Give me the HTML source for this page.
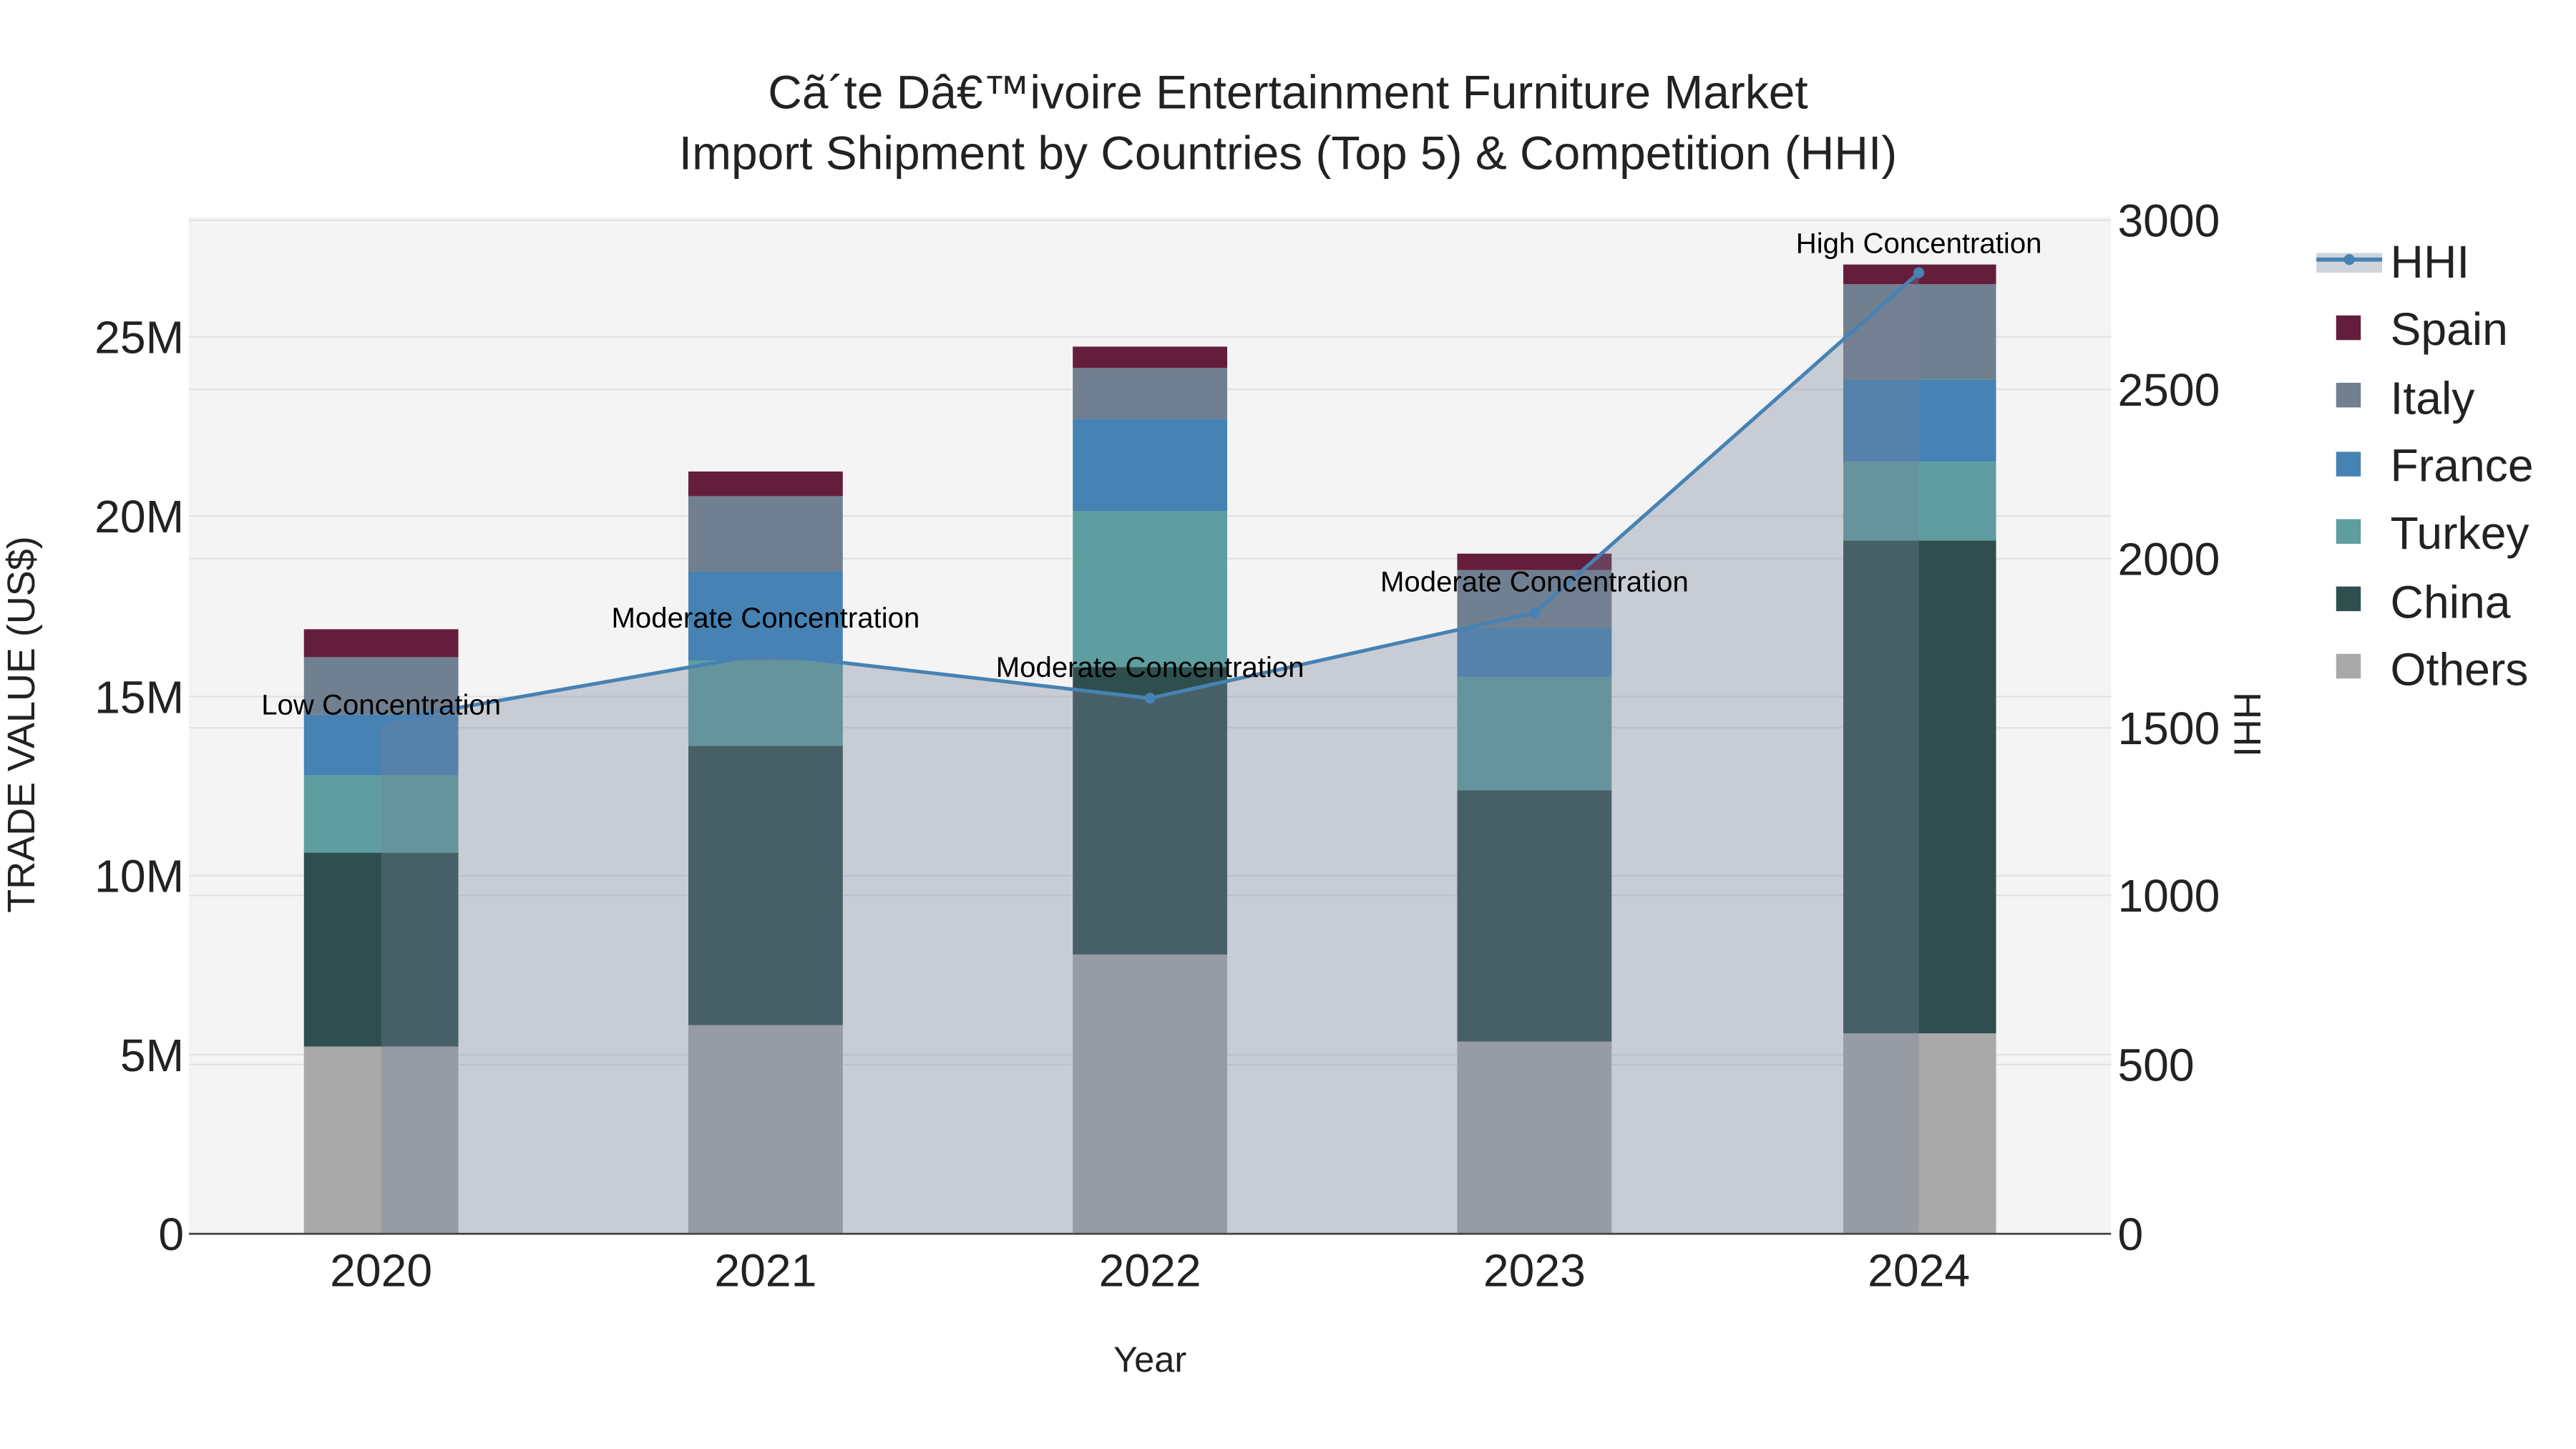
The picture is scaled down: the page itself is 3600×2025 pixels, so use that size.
<!DOCTYPE html>
<html><head><meta charset="utf-8"><style>
html,body{margin:0;padding:0;background:#fff;}
svg{display:block;}
text{font-family:"Liberation Sans",Arial,sans-serif;}
</style></head><body>
<svg width="3600" height="2025" viewBox="0 0 1568 882" preserveAspectRatio="none" xmlns="http://www.w3.org/2000/svg">
<rect x="0" y="0" width="1568" height="882" fill="#fff"/>
<rect x="115" y="132" width="1170" height="619" fill="#f4f4f4"/>
<g stroke="#e2e2e2" stroke-width="1">
<line x1="115" x2="1285" y1="642" y2="642"/><line x1="115" x2="1285" y1="533" y2="533"/>
<line x1="115" x2="1285" y1="424" y2="424"/><line x1="115" x2="1285" y1="314" y2="314"/>
<line x1="115" x2="1285" y1="205" y2="205"/>
<line x1="115" x2="1285" y1="648" y2="648"/><line x1="115" x2="1285" y1="545" y2="545"/>
<line x1="115" x2="1285" y1="443" y2="443"/><line x1="115" x2="1285" y1="340" y2="340"/>
<line x1="115" x2="1285" y1="237" y2="237"/><line x1="115" x2="1285" y1="134" y2="134"/>
</g>
<g>
<rect x="185" y="637" width="94" height="114" fill="#a9a9a9"/>
<rect x="185" y="519" width="94" height="118" fill="#2f4f4f"/>
<rect x="185" y="472" width="94" height="47" fill="#5f9ea0"/>
<rect x="185" y="435" width="94" height="37" fill="#4682b4"/>
<rect x="185" y="400" width="94" height="35" fill="#708090"/>
<rect x="185" y="383" width="94" height="17" fill="#641e3c"/>
<rect x="419" y="624" width="94" height="127" fill="#a9a9a9"/>
<rect x="419" y="454" width="94" height="170" fill="#2f4f4f"/>
<rect x="419" y="402" width="94" height="52" fill="#5f9ea0"/>
<rect x="419" y="348" width="94" height="54" fill="#4682b4"/>
<rect x="419" y="302" width="94" height="46" fill="#708090"/>
<rect x="419" y="287" width="94" height="15" fill="#641e3c"/>
<rect x="653" y="581" width="94" height="170" fill="#a9a9a9"/>
<rect x="653" y="406" width="94" height="175" fill="#2f4f4f"/>
<rect x="653" y="311" width="94" height="95" fill="#5f9ea0"/>
<rect x="653" y="255" width="94" height="56" fill="#4682b4"/>
<rect x="653" y="224" width="94" height="31" fill="#708090"/>
<rect x="653" y="211" width="94" height="13" fill="#641e3c"/>
<rect x="887" y="634" width="94" height="117" fill="#a9a9a9"/>
<rect x="887" y="481" width="94" height="153" fill="#2f4f4f"/>
<rect x="887" y="412" width="94" height="69" fill="#5f9ea0"/>
<rect x="887" y="382" width="94" height="30" fill="#4682b4"/>
<rect x="887" y="347" width="94" height="35" fill="#708090"/>
<rect x="887" y="337" width="94" height="10" fill="#641e3c"/>
<rect x="1122" y="629" width="93" height="122" fill="#a9a9a9"/>
<rect x="1122" y="329" width="93" height="300" fill="#2f4f4f"/>
<rect x="1122" y="281" width="93" height="48" fill="#5f9ea0"/>
<rect x="1122" y="231" width="93" height="50" fill="#4682b4"/>
<rect x="1122" y="173" width="93" height="58" fill="#708090"/>
<rect x="1122" y="161" width="93" height="12" fill="#641e3c"/>
</g>
<polygon points="232,751 232,439 466,398 700,425 934,373 1168,166 1168,751" fill="rgb(118,130,152)" fill-opacity="0.35"/>
<polyline points="232,439 466,398 700,425 934,373 1168,166" fill="none" stroke="#4682b4" stroke-width="2.2"/>
<g fill="#4682b4"><circle cx="232" cy="439" r="3.3"/><circle cx="466" cy="398" r="3.3"/><circle cx="700" cy="425" r="3.3"/><circle cx="934" cy="373" r="3.3"/><circle cx="1168" cy="166" r="3.3"/></g>
<line x1="115" x2="1285" y1="751" y2="751" stroke="#444" stroke-width="1.2"/>
<g font-size="17.5" fill="#000" text-anchor="middle">
<text x="232" y="435">Low Concentration</text>
<text x="466" y="382">Moderate Concentration</text>
<text x="700" y="412">Moderate Concentration</text>
<text x="934" y="360">Moderate Concentration</text>
<text x="1168" y="154">High Concentration</text>
</g>
<g font-size="28" fill="#222" text-anchor="end">
<text x="112" y="761">0</text><text x="112" y="652">5M</text><text x="112" y="543">10M</text>
<text x="112" y="434">15M</text><text x="112" y="324">20M</text><text x="112" y="215">25M</text>
</g>
<g font-size="28" fill="#222" text-anchor="start">
<text x="1289" y="761">0</text><text x="1289" y="658">500</text><text x="1289" y="555">1000</text>
<text x="1289" y="453">1500</text><text x="1289" y="350">2000</text><text x="1289" y="247">2500</text><text x="1289" y="144">3000</text>
</g>
<g font-size="28" fill="#222" text-anchor="middle">
<text x="232" y="783">2020</text><text x="466" y="783">2021</text><text x="700" y="783">2022</text>
<text x="934" y="783">2023</text><text x="1168" y="783">2024</text>
</g>
<text x="700" y="835" font-size="22" fill="#222" text-anchor="middle">Year</text>
<text transform="translate(21,441) rotate(-90)" font-size="23.5" fill="#222" text-anchor="middle">TRADE VALUE (US$)</text>
<text transform="translate(1360,441) rotate(90)" font-size="23" fill="#222" text-anchor="middle">HHI</text>
<g font-size="28.7" fill="#222" text-anchor="middle">
<text x="784" y="66">Cã´te Dâ€™ivoire Entertainment Furniture Market</text>
<text x="784" y="103">Import Shipment by Countries (Top 5) &amp; Competition (HHI)</text>
</g>
<rect x="1410" y="154" width="40" height="12" fill="rgb(118,130,152)" fill-opacity="0.35"/>
<line x1="1410" x2="1450" y1="158" y2="158" stroke="#4682b4" stroke-width="2.5"/>
<circle cx="1430" cy="158" r="3.3" fill="#4682b4"/>
<rect x="1422" y="192" width="15" height="15" fill="#641e3c"/>
<rect x="1422" y="233" width="15" height="15" fill="#708090"/>
<rect x="1422" y="275" width="15" height="15" fill="#4682b4"/>
<rect x="1422" y="316" width="15" height="15" fill="#5f9ea0"/>
<rect x="1422" y="357" width="15" height="15" fill="#2f4f4f"/>
<rect x="1422" y="398" width="15" height="15" fill="#a9a9a9"/>
<g font-size="28" fill="#222">
<text x="1455" y="169">HHI</text><text x="1455" y="210">Spain</text><text x="1455" y="252">Italy</text>
<text x="1455" y="293">France</text><text x="1455" y="334">Turkey</text><text x="1455" y="376">China</text><text x="1455" y="417">Others</text>
</g>
</svg>
</body></html>
